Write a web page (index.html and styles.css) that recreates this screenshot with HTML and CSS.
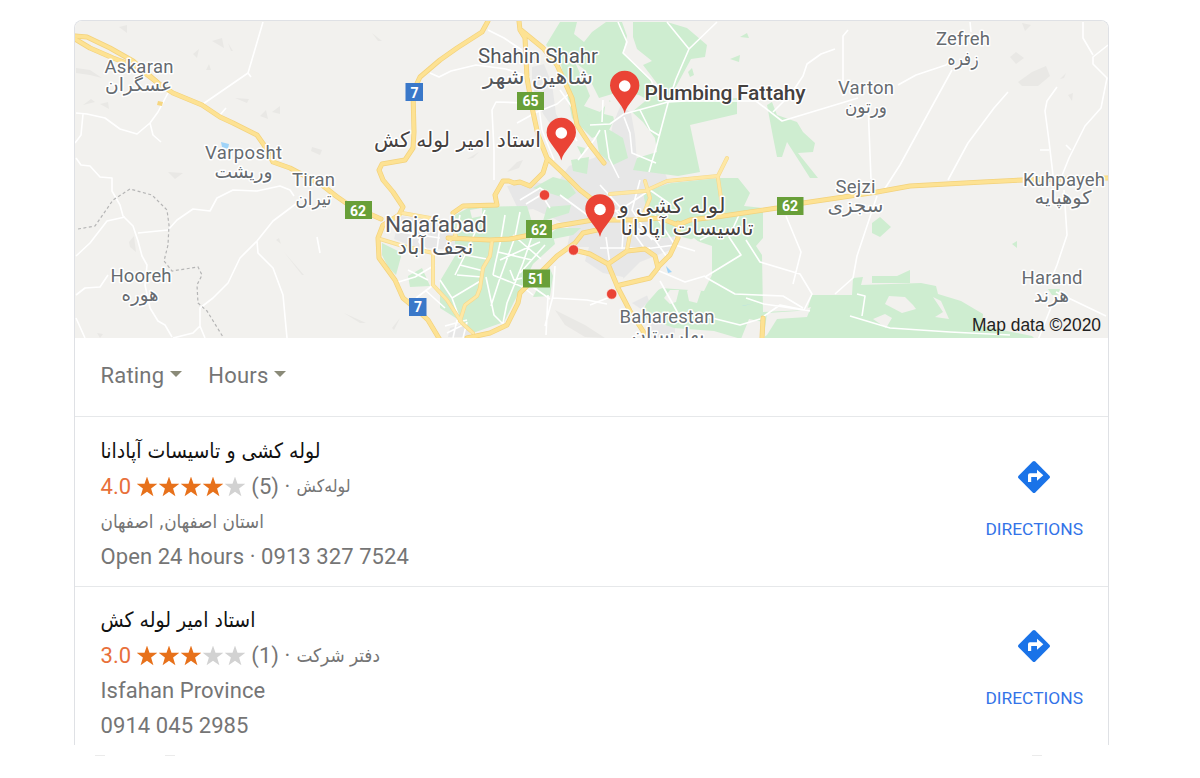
FILE: index.html
```html
<!DOCTYPE html>
<html lang="en">
<head>
    <meta charset="UTF-8">
    <meta name="viewport" content="width=device-width, initial-scale=1.0">
    <title>Local results</title>
    <link rel="stylesheet" href="styles.css">
</head>
<body>
    <svg class="symbols" width="0" height="0">
        <symbol id="star" viewBox="0 0 20 20"><path d="M10 -.5l2.500 7.300H20.200l-6.100 4.700 2.300 7.800L10 14.700 3.600 19.300l2.300-7.800L-.2 6.800h7.700z"/></symbol>
        <symbol id="directions" viewBox="0 0 32 32">
            <path fill="#1a73e8" d="M14.700.6Q16-.6 17.300.6L31.400 14.700Q32.600 16 31.400 17.300L17.300 31.400Q16 32.600 14.700 31.400L.6 17.300Q-.6 16 .6 14.700z"/>
            <path fill="#fff" d="M10 21v-6.800q0-2 2-2h7V8.700l6.300 5.500-6.300 5.500v-3.700H13.200V21z"/>
        </symbol>
        <symbol id="pin" viewBox="-15 -43 30 43" overflow="visible">
            <path fill="#ea4335" d="M0 0C-2-10-14.700-18-14.700-28A14.700 14.700 0 0 1 14.700-28C14.700-18 2-10 0 0z"/>
            <circle cy="-27.500" r="5.800" fill="#fff"/>
        </symbol>
    </svg>

    <div class="card">
        <svg class="map" viewBox="75 21 1033 317">
            <!-- hills -->
            <g class="hill">
                <path d="M119 27l8-2 0 8zM212 41l10-3 2 10zM193 54l6-5-2 9zM228 43l5 8-2 0zM206 70l3-6 2 6zM76 68l14 2 12 8-12-3-14-2zM83 105l8-6 4 3zM100 104l8-2 1 7zM235 98l14 1-2 4zM260 116l6-6 2 9zM272 112l8-6 0 8zM312 147l10 3-2 5-9-4zM168 172l15 1-8 6zM372 33l10 8-4 0zM467 159l12-7-6 6zM507 172l10-10 6-2-4 8z"/>
                <path d="M1022 23l9 2-6 6zM1010 57l6-5 8 6-8 6zM1018 82l14-10 14-6 4 10-12 10-16 0zM1060 79l6-6-2 5zM1068 95l5-2-1 8zM276 240l3-2 2 6zM284 252l20 23-2 0zM129 242l5-6 2 16-6-5zM555 310l30 15 20 13-20-1-20-12zM392 328l8-10-6 12zM344 313l22 10-6 0zM685 260l8 6-8-2zM97 333l6 1-3 4z"/>
            </g>
            <!-- built-up areas -->
            <g class="urban">
                <path d="M507 186l28-4 20 4 14-20 25-8 14-10 5-25 8-18 10 8 4 22 2 28 28 10 8 20-6 20 8 20-4 30-22 8-6 12 6 18-8 8-12-8-6-24-20-4-18-12 4-14-22 0 4-18-16-10-22-10-14 2z"/>
                <path d="M532 67l12-3 8 20 4 30 10 15-8 6-14-20-8-14-4-22zM400 216l30 4 30 10 14 10-20 10-40-3-20-8z"/>
                <path d="M483 268l10-2 2 10-10 4zM450 328l14-4 8 13-24 0zM655 315l20 12 0 11-30 0z"/>
            </g>
            <!-- farmland -->
            <g class="green">
                <path d="M560 22h17l-3 12 10 8 8-10 14-10h16l5 14-4 17 26 26 14 15-6 11-18-10-20-3-20 6-14-28-16-12-8 8-6-12-9-9z"/>
                <path d="M633 22h34l20 6 20 17-2 12-14 2-13 24-9 16-26-34 9-4-15-12-4-12z"/>
                <path d="M560 60l12-4 14 30 4 10-6 10 16 6 10-12 4 20-6 12-16 6-20-20-4-20z"/>
                <path d="M587 112l14 1-1 11-12 4zM571 160l18-3-2 17-14-3zM577 146l8 2-3 8zM595 130l8-4 20 12 5 20-15 7-14-12z"/>
                <path d="M632 112l17-14 21 4 67-4v16l-47 11 10 47-22 4-45-6 4-12 20-6-2-14-12-16z"/>
                <path d="M767 105l5-3 5 13 20 7 6 10 12 11-2 9-15 1 20 25h-8l-23-36-5 15-5 0-4-20z"/>
                <path d="M740 37l7-4 2 5zM730 59l10-4-1 7zM688 72l4-4 2 7-4 2z"/>
                <path d="M643 192l28-9 48-5h19l12 15-6 13 19 2v30l-7 8 6 9 1 57 44-2 5-15h40l1-17 10-1-2 8 60-2 15 3 2 8 23 7 22 13-1 12 50 10 6 6H765l-2-20-14-3-8 20-27-8-40-3-34-12 6-12 14-16 44 3 8-16v-29l-18-6-16-4-18 2-10-8z"/>
                <path d="M872 276h25l13-6v13h-38zM872 223l8-6 11 10-11 10-8-4zM1012 244l5-3v7zM1048 289h12l-2 6h-6z"/>
                <path d="M382 243l20 10-6 22-8-8-6-12zM455 215l15-8 57-1 8 26 16-4 4 16-22 20-14 28-15 30-31 11-14-13-19-12v-27l15-25z"/>
                <path d="M408 276l14-8 8 18-20 1zM549 266l4 10-3 20-17 1zM533 188l20-11 15 4 8 12-8 6zM543 221l4-14 24-2-2 8zM557 228l24 0-8 7-30 6z"/>
            </g>
            <g class="bare">
                <path d="M885 304l4-8 16 1 8 8 3 4-14 4zM873 319l12-5 7 4-6 10zM933 297l8 4 8 18-14-2 8-5zM664 298l6-8 9 0-3 12-6 2zM687 291l4-4 10 4-4 12-8-2zM470 210l12-2 0 8-10 2zM640 262l30-12 24-12 10 8-14 28-20 10-40 20-20-12z"/>
                <path d="M767 313l30-2 14-4-4 10-30 2-10 16-3 2zM606 100l12 5-2 12-12-3zM640 125l10 6-4 12-8-5z"/>
            </g>
            <path class="water" d="M221 142l8 2-1 5-6-2zM666 266l6 6-4 1zM742 306l13-3-12 3z"/>

            <!-- minor roads -->
            <g class="road">
                <path d="M263 22L248 73 203 104M248 73l3 4M226 108l-6 7M168 93L158 112 150 123 137 134 120 129 105 118 87 114 76 113M150 123l3 12 8 7M83 114l-2 21-6 8"/>
                <path d="M76 158l5 7 9 1 10 11 12 1v13l8 14 3 11 10 10 5 15 4 15 5 9-2 20 5 23 8 13 7 4 7 12"/>
                <path d="M76 256l14-13 17-22 18-4M138 233l30-3 9-10 16-11 17 2 7-13 16-8 24 1 23-5 10 4 4 6M297 203l-24 18-16 20-17 17-12 25-15 15-13 10v18l-7 7-20 5M200 326l5 12M257 241l1 12 15 15 10 27 4 43M76 295l9-7 15-1 8-12M76 318l9 20M317 237l3 16"/>
                <path d="M430 73l9 4 12-6 25-6 30 4 24 8M488 30l16 8 18 12M517 123l20-11 20-8 14-12M494 180v-30l-2-40 4-8 34 1M543 92l-5 8 4 30 12 30"/>
                <path d="M618 22l9 20-4 11 28 27 8 18M667 22l22 27 28-27M689 49l-13 30-8 24-12 45-7 24M590 125l20-1 14-10 44-12 18-1h70l26 20 76-23M603 100l-1 22M605 130l4 28 10 20M624 117l6 16 2 20 24 10M640 110l10 20 10 6"/>
                <path d="M835 49l-14 5-14 10-4 12-12 18-18 18M848 30l-5 6v60M970 22l1 10M898 85l18-10 30-10 6-6M868 104l3 75M952 70l-22 40-30 55-18 28M1008 92l-14 16-26 35-20 37M1083 22v16l10 17M1108 45l-15 12v7l14 14-6 30-16 18-16 32-12 30M1057 87l-10 14-2 10 4 30 4 34M1049 150l-9 0M1066 145l5 5"/>
                <path d="M1064 190l3 45-10 30-4 10M1056 292l50 24M1054 300l-16 40M877 196l-20 60-4 22-18 16M786 216l15 36-8 32M746 240l14 22 40 12 12 20-8 16-40-6-18-6M705 277l30 17 48 2 20 12M705 277l36-22-12-18 10-22M657 270l28 12 20-6M850 316l40 12 60 4 60 3M857 294l8 2-3 20M700 315l40 10 20-6 20-14 30 6M590 305l20-8"/>
                <path d="M605 200l20 20 30 20 14 20M600 185l20 22M640 180l-8 30 20 30M590 215l30-5 30-20 20 14M600 248h50M606 237l4 28M625 205l-3 44M635 235l10 14 30-4M660 281l20 36M655 215l20 30 20 6M700 240l12-6"/>
                <path d="M455 275l10-20 20-45M465 255l22 4M460 265l24 6M457 275l25 2M440 280l12 18 30-18M452 298l8 22M505 215l-4 24-6 26-2 10M520 212l-5 25-16 44-8 25M533 233l-10 30-16 40-4 20M545 245l-25 28M493 275l30 12 10 8M486 277l8 38 10 10M500 260l40-18M498 252l34 8M513 235l28 24M510 270l4 10 8-2M555 266l-2 30-8 30M548 295l-2 40M530 285l20 14M553 298l34 2 20 4"/>
                <path d="M395 283l20-6 20-12M408 270l20 10M425 222l-6 20 10 10M440 225l-3 25M400 232l40 6M460 215l-4 20M425 290l20 18M432 286l-16 12M445 326l22-6M447 333l20-10M453 338l4-18M463 338l4-16M520 200l20-12 6 4-20 12M560 195l30 22M540 192l10 16M560 90l14 20M567 125l10 16M578 160l16-20 6-10"/>
            </g>
            <path class="border-line" d="M78 229l17-3 18-26 17-11 22 6 15 15 2 15-1 20-4 16 8 10 26-4 4 8-5 10 1 18 9 8 16 26"/>

            <!-- highways, drawn twice for the darker edge -->
            <defs>
                <g id="highways">
                    <path d="M75 36l12 1 23 11 23 13 25 22 15 10 29 12 18 12 13 6 24 12 7 10 9 17 17 6 32 17 14 11 10 7 26 12 9 4"/>
                    <path d="M75 39l15 9 23 10 24 9 21 16"/>
                    <path d="M488 21l-6 11-25 16-17 12-20 17-7 15 1 40-1 16-8 12-23 4-3 6 4 10 10 12 10 15-4 8-16 10-5 13 1 20 16 22 8 18 12 10 13 12 12 20"/>
                    <path d="M519 21l1 9 5 8 2 40 6 34 5 23 9 23 16 15 17 17 13 10M521 30l22 18 14 17 15 33 5 27 13 20 14 18M547 160l-4 13-13 13-10-4-6 1-5-2-6 0-8 14 2 10-34 1-10 7"/>
                    <path d="M467 338l23-5 17-8 11-22 2-10 23-23 14-14 18-13 8-10 14-3"/>
                    <path d="M448 238l42 2 20-1 20-4 27-9 36-6 40 0 27-2 18 7 12-5 33-4 54-8 26-5 34-5 40-6 33-6 73-4 40-2 85-2"/>
                    <path d="M578 251l12 3 18 10 19-13 18-2 10 7 3 12-8 10-30 7M608 264l10 24 12 23 13 20 3 8M658 267l12-12 8-17v-15M763 318l-1 20"/>
                </g>
                <g id="main-roads">
                    <path d="M402 213l28 5 22 8 4 10-6 4M380 239l23 7 30 7v32l14 15 15 23 11 10M492 241l-2 15-7 12-3 20-3 8-12 9-5 16"/>
                    <path d="M610 194l35-3 22-10 51-5 4-8 5-10M718 178l4 27M645 181l5 17-8 20-10 6-5 26"/>
                </g>
            </defs>
            <use href="#main-roads" class="main-edge"/>
            <use href="#highways" class="highway-edge"/>
            <use href="#main-roads" class="main-fill"/>
            <use href="#highways" class="highway-fill"/>
            <path class="block" d="M158 101l5 1-1 4-5-1z"/>

            <!-- road shields -->
            <g class="shield">
                <rect class="blue" x="405.500" y="83" width="17.500" height="18"/><text x="414.500" y="97.500">7</text>
                <rect class="blue" x="409" y="298" width="17.500" height="18"/><text x="418" y="312.300">7</text>
                <rect x="517" y="92" width="27" height="18"/><text x="530.500" y="106">65</text>
                <rect x="345" y="201" width="27" height="18"/><text x="358" y="215.500">62</text>
                <rect x="526" y="220" width="26" height="18"/><text x="539" y="234.500">62</text>
                <rect x="523" y="269.500" width="27" height="18"/><text x="536" y="284">51</text>
                <rect x="777" y="197" width="26.500" height="18"/><text x="790" y="211">62</text>
            </g>

            <!-- places -->
            <g class="place">
                <text x="139" y="73" textLength="69">Askaran</text>
                <text x="243.500" y="159" textLength="77">Varposht</text>
                <text x="313.500" y="186" textLength="43">Tiran</text>
                <text x="141" y="282" textLength="61">Hooreh</text>
                <text x="963" y="45" textLength="54">Zefreh</text>
                <text x="866" y="94" textLength="56">Varton</text>
                <text x="855.500" y="193" textLength="40">Sejzi</text>
                <text x="1064" y="185.500" textLength="82">Kuhpayeh</text>
                <text x="1052" y="284" textLength="61">Harand</text>
                <text x="667" y="323" textLength="95">Baharestan</text>
            </g>
            <g class="place fa">
                <text x="138.500" y="91" textLength="67" lengthAdjust="spacingAndGlyphs">عسگران</text>
                <text x="243.500" y="178" textLength="58" lengthAdjust="spacingAndGlyphs">وریشت</text>
                <text x="313.500" y="204.500" textLength="36" lengthAdjust="spacingAndGlyphs">تیران</text>
                <text x="140" y="300.500" textLength="37" lengthAdjust="spacingAndGlyphs">هوره</text>
                <text x="963" y="64.500" textLength="31" lengthAdjust="spacingAndGlyphs">زفره</text>
                <text x="866" y="113" textLength="42" lengthAdjust="spacingAndGlyphs">ورتون</text>
                <text x="855.500" y="211.500" textLength="56" lengthAdjust="spacingAndGlyphs">سجزی</text>
                <text x="1063" y="204" textLength="57" lengthAdjust="spacingAndGlyphs">کوهپایه</text>
                <text x="1051.500" y="302" textLength="35" lengthAdjust="spacingAndGlyphs">هرند</text>
                <text x="668" y="341" textLength="73" lengthAdjust="spacingAndGlyphs">بهارستان</text>
            </g>
            <g class="place city">
                <text x="538" y="62.500" textLength="120">Shahin Shahr</text>
                <text class="najafabad" x="436" y="232" textLength="102">Najafabad</text>
                <text class="fa" x="538" y="84" textLength="110" lengthAdjust="spacingAndGlyphs">شاهین شهر</text>
                <text class="fa" x="435.500" y="253.500" textLength="76" lengthAdjust="spacingAndGlyphs">نجف آباد</text>
            </g>
            <g class="place business">
                <text x="725" y="99.500" textLength="161">Plumbing Fattahy</text>
                <text class="fa" x="457.500" y="147" textLength="167" lengthAdjust="spacingAndGlyphs">استاد امیر لوله کش</text>
                <text class="fa" x="672" y="212.500" textLength="107" lengthAdjust="spacingAndGlyphs">لوله کشی و</text>
                <text class="fa" x="687" y="234.500" textLength="133" lengthAdjust="spacingAndGlyphs">تاسیسات آپادانا</text>
            </g>

            <g fill="#ea4335" stroke="#fff" stroke-width=".6">
                <circle cx="544.500" cy="195" r="5.200"/>
                <circle cx="573.500" cy="250" r="5.200"/>
                <circle cx="611.700" cy="294" r="5.200"/>
            </g>
            <use href="#pin" x="609.700" y="70.500" width="30" height="43"/>
            <use href="#pin" x="546.300" y="117.500" width="30" height="43"/>
            <use href="#pin" x="585" y="194" width="30" height="43"/>

            <text class="copyright" x="972" y="331" textLength="129" lengthAdjust="spacingAndGlyphs">Map data ©2020</text>
        </svg>

        <div class="filters">
            <span class="filter">Rating</span>
            <span class="filter">Hours</span>
        </div>

        <div class="result">
            <div class="info">
                <h3>لوله کشی و تاسیسات آپادانا</h3>
                <p class="rating">
                    <span class="score">4.0</span>
                    <span class="stars"><svg><use href="#star"/></svg><svg><use href="#star"/></svg><svg><use href="#star"/></svg><svg><use href="#star"/></svg><svg class="off"><use href="#star"/></svg></span>
                    <span class="count">(5) ·</span>
                    <span class="fa-text short">لوله‌کش</span>
                </p>
                <p class="fa-text">استان اصفهان, اصفهان</p>
                <p>Open 24 hours · 0913 327 7524</p>
            </div>
            <a class="directions">
                <svg><use href="#directions"/></svg>
                DIRECTIONS
            </a>
        </div>

        <div class="result">
            <div class="info">
                <h3>استاد امیر لوله کش</h3>
                <p class="rating">
                    <span class="score">3.0</span>
                    <span class="stars"><svg><use href="#star"/></svg><svg><use href="#star"/></svg><svg><use href="#star"/></svg><svg class="off"><use href="#star"/></svg><svg class="off"><use href="#star"/></svg></span>
                    <span class="count">(1) ·</span>
                    <span class="fa-text">دفتر شرکت</span>
                </p>
                <p>Isfahan Province</p>
                <p>0914 045 2985</p>
            </div>
            <a class="directions">
                <svg><use href="#directions"/></svg>
                DIRECTIONS
            </a>
        </div>
    </div>

    <div class="next-row">
        <span></span>
        <span></span>
        <span></span>
    </div>
</body>
</html>
```
FILE: styles.css
```css
* {
    box-sizing: border-box;
}
body {
    margin: 0;
    padding: 20px 0 0 74px;
    height: 778px;
    overflow: hidden;
    background: #fff;
    font-family: Roboto, "DejaVu Sans", sans-serif;
    color: #757575;
}
.symbols {
    display: block;
}
.card {
    width: 1035px;
    height: 725px;
    border: 1px solid #dfe1e5;
    border-bottom: none;
    border-radius: 8px 8px 0 0;
    overflow: hidden;
}
/* map */
.map {
    display: block;
    width: 1033px;
    height: 317px;
    background: #f2f1ee;
}
.hill {
    fill: #e9e8e5;
}
.urban {
    fill: #e7e7e7;
}
.green {
    fill: #ceedd0;
}
.bare {
    fill: #f2f1ee;
}
.water {
    fill: #9fd3f8;
}
.road {
    fill: none;
    stroke: #fff;
    stroke-width: 1.6;
    stroke-linejoin: round;
}
.border-line {
    fill: none;
    stroke: #b5b5b5;
    stroke-width: 1.2;
    stroke-dasharray: 3 2.5;
}
.highway-edge, .highway-fill, .main-edge, .main-fill {
    fill: none;
    stroke-linejoin: round;
    stroke-linecap: round;
}
.highway-edge {
    stroke: #f3d27c;
    stroke-width: 5;
}
.highway-fill {
    stroke: #fde293;
    stroke-width: 3.6;
}
.main-edge {
    stroke: #f5d98d;
    stroke-width: 4;
}
.main-fill {
    stroke: #fee8a5;
    stroke-width: 2.8;
}
.block {
    fill: #f6d680;
}
.shield rect {
    fill: #689f38;
}
.shield .blue {
    fill: #3a78c9;
}
.shield text {
    fill: #fff;
    font-size: 14px;
    font-weight: bold;
    text-anchor: middle;
}
.place {
    fill: #666b70;
    font-size: 18.5px;
    text-anchor: middle;
    paint-order: stroke;
    stroke: #fff;
    stroke-width: 3px;
    stroke-linejoin: round;
}
.fa {
    font-family: "DejaVu Sans", sans-serif;
    font-size: 18.5px;
}
.city {
    fill: #53565a;
    font-size: 20.5px;
}
.najafabad {
    font-size: 22.5px;
}
.business {
    fill: #45413f;
    font-size: 21px;
    font-weight: 500;
}
.city .fa, .business .fa {
    font-size: 21px;
    font-weight: normal;
}
.copyright {
    fill: #222;
    font-family: "Liberation Sans", Arial, sans-serif;
    font-size: 17.5px;
}
/* filters */
.filters {
    display: flex;
    align-items: center;
    gap: 26px;
    height: 78px;
    padding: 0 25.5px 3px;
    font-size: 22px;
    letter-spacing: 0.2px;
}
.filter {
    display: flex;
    align-items: center;
    gap: 6px;
}
.filter::after {
    content: "";
    border: 6.5px solid transparent;
    border-top-color: #8a8a78;
    border-bottom: none;
    margin-top: -4px;
}
/* results */
.result {
    display: flex;
    justify-content: space-between;
    height: 170px;
    padding: 17px 25px 0 25.5px;
    border-top: 1px solid #e6e8ea;
}
.result + .result {
    height: 169px;
    padding-top: 16px;
}
h3, p {
    margin: 0;
    height: 35px;
    line-height: 35px;
    font-size: 22px;
    font-weight: normal;
    white-space: nowrap;
}
p {
    letter-spacing: 0.08px;
}
h3 {
    color: #111;
    font-family: "DejaVu Sans Condensed", "DejaVu Sans", sans-serif;
    font-size: 21px;
}
.fa-text {
    font-family: "DejaVu Sans Condensed", "DejaVu Sans", sans-serif;
    font-size: 18.8px;
    letter-spacing: 0;
}
.short {
    font-size: 17.6px;
}
.rating {
    display: flex;
    align-items: center;
    gap: 6px;
}
.score {
    color: #e8703a;
}
.stars {
    display: flex;
    gap: 2px;
}
.stars svg {
    width: 20px;
    height: 20px;
    fill: #e7711b;
    overflow: visible;
}
.stars .off {
    fill: #d2d2d2;
}
.directions {
    display: flex;
    flex-direction: column;
    align-items: center;
    gap: 26px;
    padding-top: 27px;
    color: #3373e8;
    font-size: 17.4px;
    line-height: 20px;
}
.directions svg {
    width: 32px;
    height: 32px;
}
/* top edge of the row below the fold */
.next-row {
    display: flex;
    gap: 60px;
    padding: 10px 0 0 21px;
}
.next-row span {
    width: 10px;
    height: 1px;
    background: #ebebeb;
}
.next-row span:last-child {
    margin-left: 797px;
}
```
